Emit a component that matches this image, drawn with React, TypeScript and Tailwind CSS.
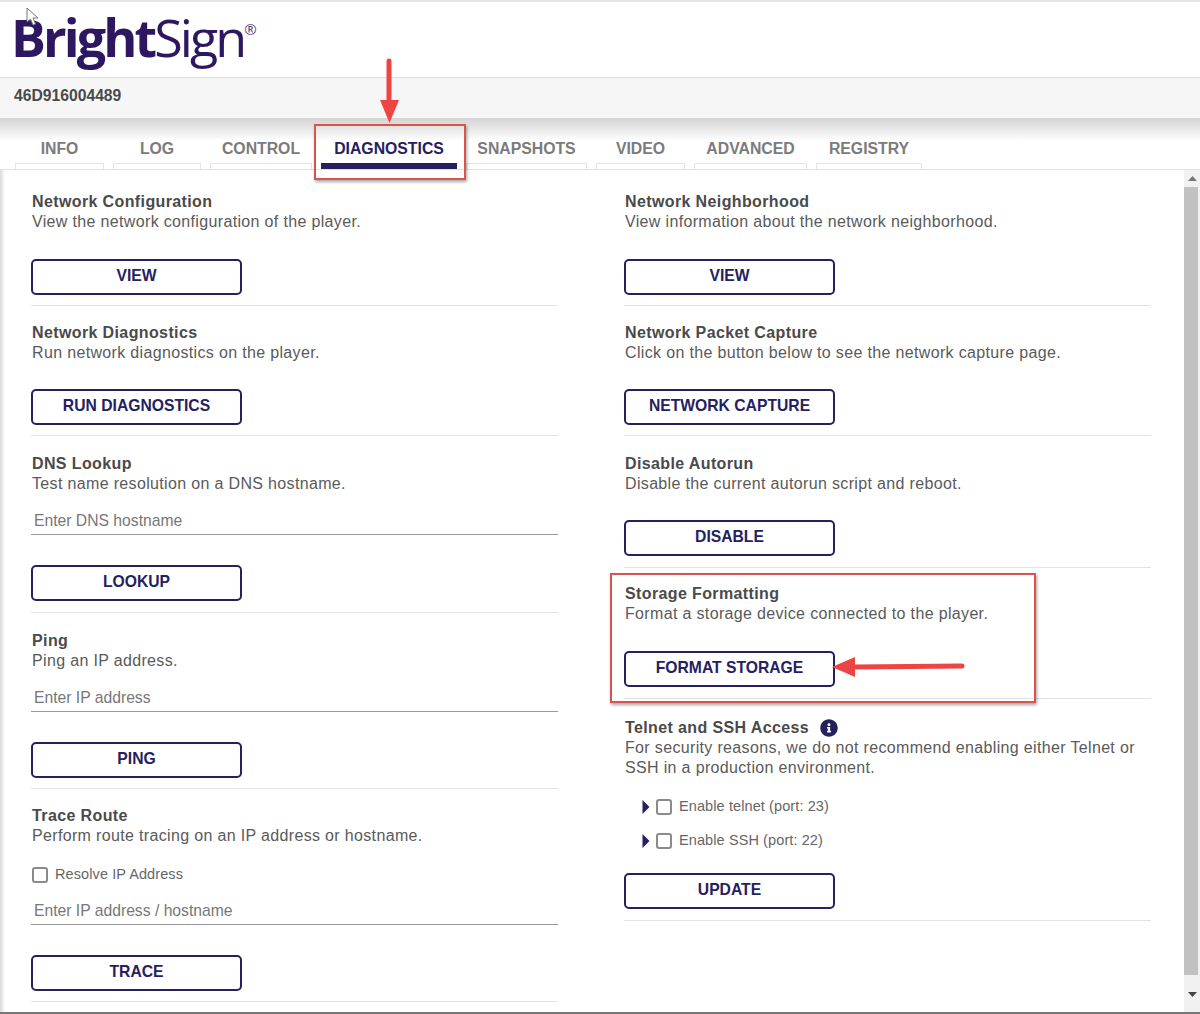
import { ReactNode } from 'react';
import { FaInfoCircle } from 'react-icons/fa';

const tabs = [
  { label: 'INFO', width: 'w-[89px]' },
  { label: 'LOG', width: 'w-[88px]' },
  { label: 'CONTROL', width: 'w-[102px]' },
  { label: 'DIAGNOSTICS', width: 'w-[136px]', active: true },
  { label: 'SNAPSHOTS', width: 'w-[121px]' },
  { label: 'VIDEO', width: 'w-[89px]' },
  { label: 'ADVANCED', width: 'w-[113px]' },
  { label: 'REGISTRY', width: 'w-[106px]' },
];

function NavyButton({ label, className }: { label: string; className: string }) {
  return (
    <button className={`block w-[211px] h-[36px] pb-[2px] bg-white border-2 border-[#25215f] rounded-[5px] text-[15.7px] font-bold text-[#25215f] ${className}`}>
      {label}
    </button>
  );
}

function Section({ title, titleExtra, desc, children, className }: { title: string; titleExtra?: ReactNode; desc: ReactNode; children: ReactNode; className: string }) {
  return (
    <div className={`border-b border-[#e2e2e2] ${className}`}>
      <div className="flex items-center gap-[11px] pl-[1px] text-[16px] leading-[20px] tracking-[0.38px] font-bold text-[#4a4a4a]">
        {title}
        {titleExtra}
      </div>
      <div className="pl-[1px] text-[16px] leading-[19.5px] tracking-[0.34px] text-[#5a5a5a]">{desc}</div>
      {children}
    </div>
  );
}

function TextField({ placeholder, className }: { placeholder: string; className: string }) {
  return (
    <input
      placeholder={placeholder}
      className={`block w-full h-[27px] pl-[3px] text-[15.7px] border-b border-[#9a9a9a] outline-none placeholder:text-[#777] ${className}`}
    />
  );
}

function Check({ label, caret }: { label: string; caret?: boolean }) {
  return (
    <div className="flex items-center text-[14.5px] tracking-[0.1px] text-[#666]">
      {caret && (
        <svg width="8" height="14" viewBox="0 0 8 14" className="mr-[5px]">
          <polygon points="0.5,0 7.5,7 0.5,14" fill="#25215f" />
        </svg>
      )}
      <span className="w-[16px] h-[16px] ml-[1px] border-2 border-[#8a8a8a] rounded-[3px] mr-[7px]" />
      {label}
    </div>
  );
}

export default function App() {
  return (
    <div className="relative w-[1200px] h-[1014px] overflow-hidden bg-white font-['Liberation_Sans',Arial,sans-serif]">
      {/* Logo */}
      <div className="h-[78px] border-t-2 border-b border-t-[#e6e6e6] border-b-[#dedede] pl-[11px]">
        <div className="flex items-start text-[#2c1760] font-['Open_Sans',sans-serif] text-[52px] leading-[69px] tracking-[-2.9px]">
          <span className="font-bold">Bright</span>
          <span className="font-normal">Sign</span>
          <span className="text-[15px] leading-[15px] mt-[20px] ml-[0px] tracking-normal text-[#55447f]">®</span>
        </div>
      </div>

      {/* Serial */}
      <div className="h-[40px] bg-[#f6f6f6] pl-[14px] text-[15.7px] leading-[35px] font-bold text-[#4a4a4a]">46D916004489</div>

      {/* Tabs */}
      <div className="h-[52px] flex items-end gap-[9px] pl-[15px] border-b border-[#e2e2e2] bg-gradient-to-b from-[#d4d4d4] via-white via-[45%] to-white">
        {tabs.map((tab) => (
          <div key={tab.label} className={`${tab.width} flex flex-col items-center`}>
            <span className={`text-[15.8px] leading-[20px] font-bold ${tab.active ? 'text-[#25215f]' : 'text-[#7b7b7b]'}`}>{tab.label}</span>
            <div className={`w-full mt-[4px] h-[6px] ${tab.active ? 'bg-[#25215f]' : 'border border-b-0 border-[#e4e4e4]'}`} />
          </div>
        ))}
      </div>

      {/* Content */}
      <div className="flex h-[844px] shadow-[inset_5px_0_4px_-3px_rgba(0,0,0,0.18)]">
        <div className="w-[1184px] grid grid-cols-[527px_527px] gap-x-[66px] pl-[31px] pt-[22px] content-start items-start">
          <div>
            <Section title="Network Configuration" desc="View the network configuration of the player." className="pb-[10px]">
              <NavyButton label="VIEW" className="mt-[27px]" />
            </Section>
            <Section title="Network Diagnostics" desc="Run network diagnostics on the player." className="pt-[17px] pb-[10px]">
              <NavyButton label="RUN DIAGNOSTICS" className="mt-[27px]" />
            </Section>
            <Section title="DNS Lookup" desc="Test name resolution on a DNS hostname." className="pt-[18px] pb-[10.5px]">
              <TextField placeholder="Enter DNS hostname" className="mt-[14.5px]" />
              <NavyButton label="LOOKUP" className="mt-[30px]" />
            </Section>
            <Section title="Ping" desc="Ping an IP address." className="pt-[18.5px] pb-[10px]">
              <TextField placeholder="Enter IP address" className="mt-[14.5px]" />
              <NavyButton label="PING" className="mt-[30px]" />
            </Section>
            <Section title="Trace Route" desc="Perform route tracing on an IP address or hostname." className="pt-[17px] pb-[10.5px]">
              <div className="mt-[18.5px]">
                <Check label="Resolve IP Address" />
              </div>
              <TextField placeholder="Enter IP address / hostname" className="mt-[12px]" />
              <NavyButton label="TRACE" className="mt-[30px]" />
            </Section>
          </div>

          <div>
            <Section title="Network Neighborhood" desc="View information about the network neighborhood." className="pb-[10px]">
              <NavyButton label="VIEW" className="mt-[27px]" />
            </Section>
            <Section title="Network Packet Capture" desc="Click on the button below to see the network capture page." className="pt-[17px] pb-[10px]">
              <NavyButton label="NETWORK CAPTURE" className="mt-[27px]" />
            </Section>
            <Section title="Disable Autorun" desc="Disable the current autorun script and reboot." className="pt-[18px] pb-[11px]">
              <NavyButton label="DISABLE" className="mt-[26.5px]" />
            </Section>
            <Section title="Storage Formatting" desc="Format a storage device connected to the player." className="pt-[16px] pb-[11px]">
              <NavyButton label="FORMAT STORAGE" className="mt-[27.5px]" />
            </Section>
            <Section
              title="Telnet and SSH Access"
              titleExtra={<FaInfoCircle className="text-[#25215f]" size={18} />}
              desc={<>For security reasons, we do not recommend enabling either Telnet or<br />SSH in a production environment.</>}
              className="pt-[19px] pb-[11px]"
            >
              <div className="mt-[19px] pl-[18px] flex flex-col gap-[12.25px]">
                <Check label="Enable telnet (port: 23)" caret />
                <Check label="Enable SSH (port: 22)" caret />
              </div>
              <NavyButton label="UPDATE" className="mt-[21px]" />
            </Section>
          </div>
        </div>

        {/* Scrollbar */}
        <div className="w-[16px] flex flex-col bg-[#f1f1f1]">
          <div className="h-[17px] flex items-center justify-center">
            <svg width="9" height="5" viewBox="0 0 9 5"><polygon points="4.5,0 9,5 0,5" fill="#777" /></svg>
          </div>
          <div className="h-[788px] bg-[#c1c1c1] mr-[2px]" />
          <div className="flex-1 flex items-center justify-center">
            <svg width="9" height="5" viewBox="0 0 9 5"><polygon points="0,0 9,0 4.5,5" fill="#444" /></svg>
          </div>
        </div>
      </div>

      {/* Annotations drawn over the page */}
      <div className="absolute left-[314px] top-[124px] w-[152px] h-[56px] border-2 border-[#d9534f] shadow-[1px_2px_3px_rgba(0,0,0,0.35)]" />
      <div className="absolute left-[610px] top-[573px] w-[426px] h-[130px] border-2 border-[#d9534f] shadow-[1px_2px_3px_rgba(0,0,0,0.35)]" />
      <svg className="absolute left-[378px] top-[58px]" width="24" height="68" viewBox="0 0 24 68">
        <path d="M11 3 L11 44" stroke="#ef4444" strokeWidth="5" strokeLinecap="round" />
        <polygon points="2,42 21,42 11.5,65" fill="#ef4444" />
      </svg>
      <svg className="absolute left-[830px] top-[654px]" width="138" height="26" viewBox="0 0 138 26">
        <path d="M25 13 L132 12" stroke="#ef4444" strokeWidth="5" strokeLinecap="round" />
        <polygon points="2,13 25,3 25,23" fill="#ef4444" />
      </svg>

      {/* Mouse cursor */}
      <svg className="absolute left-[26px] top-[7px]" width="14" height="20" viewBox="0 0 14 20">
        <path d="M1 1 L1 15 L4.5 12 L7 18 L9.5 17 L7 11 L12 11 Z" fill="#fff" stroke="#777" strokeWidth="1" />
      </svg>

      {/* Window bottom edge */}
      <div className="absolute left-0 right-0 bottom-0 h-[2px] bg-[#777]" />
    </div>
  );
}
